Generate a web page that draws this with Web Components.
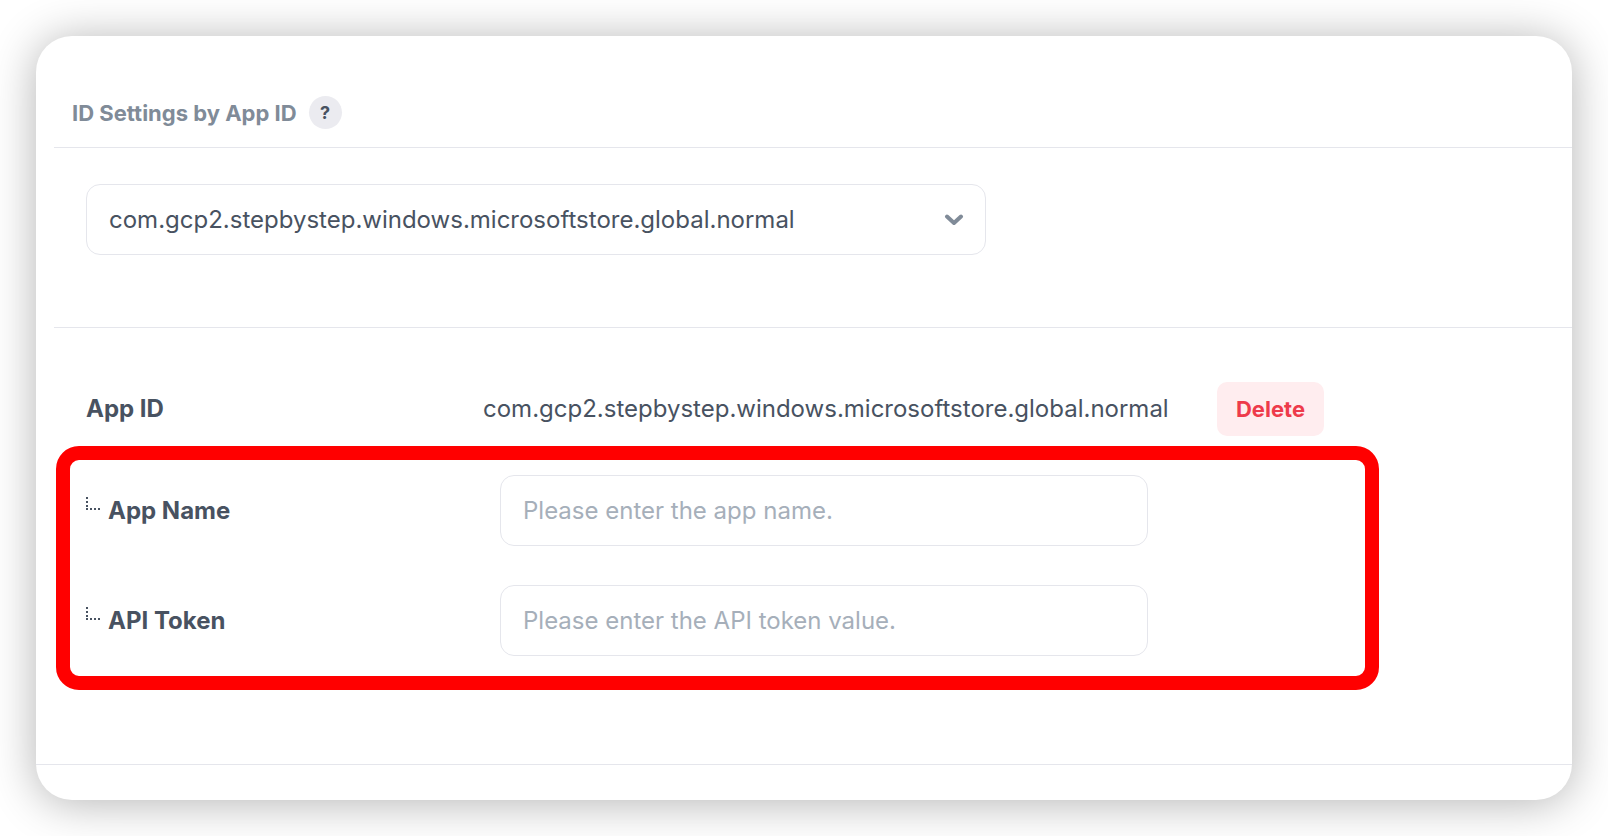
<!DOCTYPE html>
<html lang="en">
<head>
<meta charset="utf-8">
<meta name="viewport" content="width=device-width, initial-scale=1">
<title>ID Settings by App ID</title>
<style>
  body {
    margin: 0;
    background: #fff;
    color: #485261;
    font: 400 24px/32px Inter, "Liberation Sans", sans-serif;
    --line: #e5e6ec;
  }
</style>
</head>
<body>
<settings-card>
  <settings-heading slot="heading" help="?">ID Settings by App ID</settings-heading>
  <app-select></app-select>
  <app-details></app-details>
</settings-card>

<script>
const register = (name, html) => {
  const template = document.createElement('template');
  template.innerHTML = '<style>*{box-sizing:border-box}</style>' + html;
  customElements.define(name, class extends HTMLElement {
    constructor() {
      super();
      this.attachShadow({ mode: 'open' }).append(template.content.cloneNode(true));
    }
    connectedCallback() {
      this.shadowRoot.querySelectorAll('[data-text]').forEach(el => {
        el.textContent = this.getAttribute(el.dataset.text);
      });
      const input = this.shadowRoot.querySelector('input');
      if (input) input.placeholder = this.getAttribute('placeholder');
    }
  });
};

register('settings-card', `
  <style>
    :host { display: block; padding: 36px; }
    main {
      border-radius: 36px;
      background: #fff;
      box-shadow: 0 3px 46px rgba(0, 0, 0, .3);
    }
    .body { padding: 0 0 74px 18px; }
    footer { height: 36px; border-top: 1px solid var(--line); }
  </style>
  <main>
    <div class="body">
      <slot name="heading"></slot>
      <slot></slot>
    </div>
    <footer></footer>
  </main>
`);

register('settings-heading', `
  <style>
    :host {
      display: flex;
      align-items: center;
      gap: 12px;
      padding: 60px 18px 18px;
      border-bottom: 1px solid var(--line);
      color: #808b98;
    }
    h1 { margin: 0; font-size: 22px; font-weight: 700; line-height: 32px; }
    button {
      width: 33px;
      height: 33px;
      padding: 0;
      border: 0;
      border-radius: 50%;
      background: #ebebf0;
      color: #485261;
      font: 700 18px/33px Inter, sans-serif;
    }
  </style>
  <h1><slot></slot></h1>
  <button type="button" aria-label="Help" data-text="help"></button>
`);

register('app-select', `
  <style>
    :host {
      display: block;
      padding: 36px 32px 72px;
      border-bottom: 1px solid var(--line);
    }
    .field { position: relative; max-width: 900px; }
    select {
      display: block;
      width: 100%;
      height: 71px;
      padding: 0 64px 0 22px;
      border: 1px solid var(--line);
      border-radius: 14px;
      background: #fff;
      color: inherit;
      font: inherit;
      appearance: none;
    }
    svg { position: absolute; right: 22px; top: 30px; pointer-events: none; }
  </style>
  <div class="field">
    <select aria-label="App ID">
      <option>com.gcp2.stepbystep.windows.microsoftstore.global.normal</option>
    </select>
    <svg width="20" height="12" viewBox="0 0 20 12" fill="none" stroke="#808b98" stroke-width="4" stroke-linecap="round" stroke-linejoin="round" aria-hidden="true"><path d="M3 2.5l7 6.5 7-6.5"/></svg>
  </div>
`);

register('app-details', `
  <style>
    :host { display: block; padding: 54px 0 0 2px; }
    .row { display: flex; align-items: center; padding: 0 30px 10px; }
    h2 { flex: 0 0 397px; margin: 0; font-size: 24px; font-weight: 700; line-height: 32px; }
    .value { flex: 0 0 734px; }
    .group {
      display: grid;
      gap: 39px;
      max-width: 1323px;
      padding: 15px 16px 20px;
      border: 14px solid #f00;
      border-radius: 23px;
    }
  </style>
  <div class="row">
    <h2>App ID</h2>
    <span class="value">com.gcp2.stepbystep.windows.microsoftstore.global.normal</span>
    <delete-button>Delete</delete-button>
  </div>
  <div class="group">
    <text-field label="App Name" placeholder="Please enter the app name."></text-field>
    <text-field label="API Token" placeholder="Please enter the API token value."></text-field>
  </div>
`);

register('delete-button', `
  <style>
    :host { display: block; }
    button {
      display: block;
      min-width: 107px;
      height: 54px;
      padding: 0 18px;
      border: 0;
      border-radius: 10px;
      background: #ffedef;
      color: #ee3b4b;
      font: 700 22px/32px Inter, sans-serif;
    }
  </style>
  <button type="button"><slot></slot></button>
`);

register('text-field', `
  <style>
    :host { display: flex; align-items: center; }
    label {
      display: flex;
      flex: 0 0 414px;
      gap: 8px;
      font-size: 24px;
      font-weight: 700;
    }
    input {
      flex: 0 1 648px;
      min-width: 0;
      height: 71px;
      padding: 0 22px;
      border: 1px solid var(--line);
      border-radius: 14px;
      background: #fff;
      color: inherit;
      font: inherit;
    }
    input::placeholder { color: #a6afba; opacity: 1; }
  </style>
  <label for="field">
    <svg width="14" height="24" viewBox="0 0 14 24" fill="none" stroke="#485261" stroke-width="2" stroke-dasharray="2 2" aria-hidden="true"><path d="M1 2v12M0 14h14"/></svg>
    <span data-text="label"></span>
  </label>
  <input id="field" type="text">
`);
</script>
</body>
</html>
